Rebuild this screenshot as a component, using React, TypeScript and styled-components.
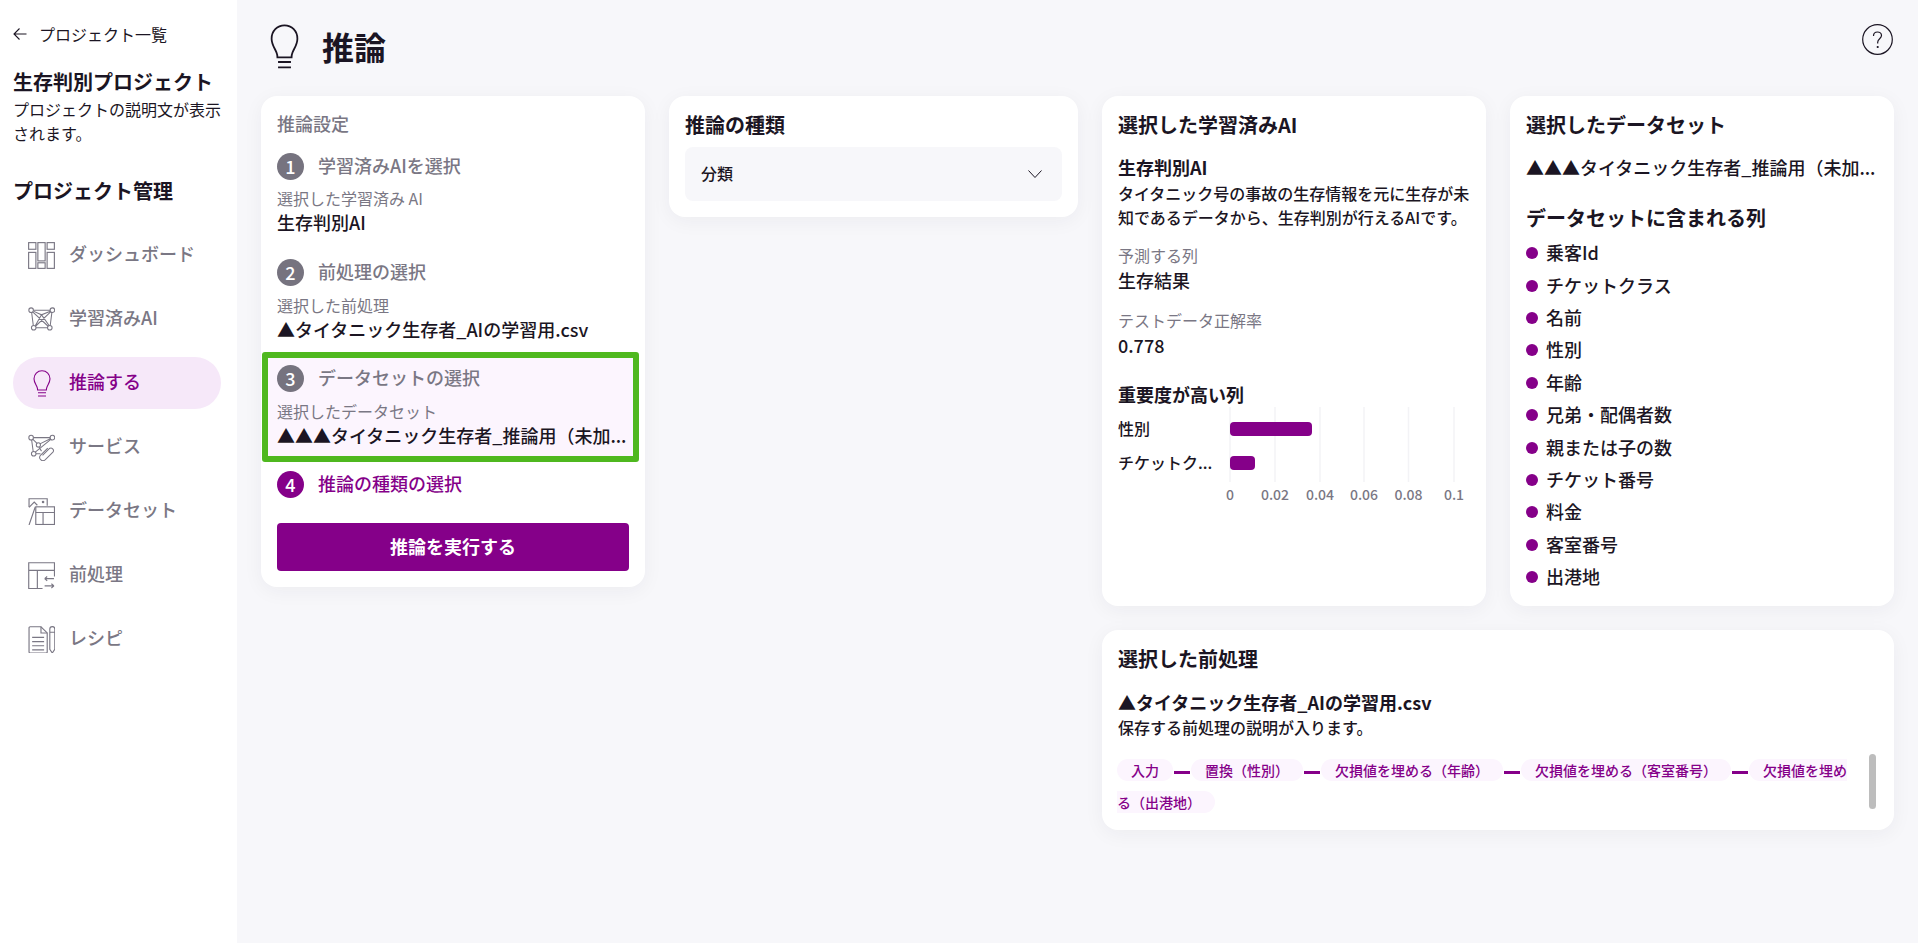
import React from "react";
import styled, { createGlobalStyle, css } from "styled-components";

const PURPLE = "#850089";
const GREY = "#7a7784";
const DARK = "#1b1523";

// the CJK face sits a little low in its line box, so single lines get a shorter box plus padding
const line = (height: number) => css`
  line-height: ${height - 2}px;
  padding-bottom: 2px;
`;

const GlobalStyle = createGlobalStyle`
  html, body {
    margin: 0;
    height: 100%;
    overflow: hidden;
    background: #f7f7fa;
  }
  body {
    font-family: "Noto Sans CJK JP", "Noto Sans", sans-serif;
    color: ${DARK};
  }
  * {
    box-sizing: border-box;
  }
`;

const BulbIcon: React.FC<{ width: number; height: number }> = ({ width, height }) => (
  <svg width={width} height={height} viewBox="0 0 18 27" fill="none" stroke="currentColor" strokeWidth="1.1" preserveAspectRatio="none">
    <path d="M9 .8C4.4.8 1 4.3 1 8.8c0 3.4 1.9 5.6 3 8.2.4.9.6 1.7.6 3h8.8c0-1.3.2-2.1.6-3 1.100-2.600 3-4.800 3-8.200C17 4.300 13.600.8 9 .8z" />
    <path d="M5 22.800h8M5 26h8" />
  </svg>
);

const DashboardIcon = () => (
  <svg width="27" height="27" viewBox="0 0 26 26" fill="none" stroke="currentColor" strokeWidth="1.1">
    <rect x="0.6" y="0.6" width="7" height="6.400" />
    <rect x="0.6" y="10" width="7" height="15.400" />
    <rect x="9.500" y="0.6" width="7" height="17.600" />
    <rect x="9.500" y="20" width="7" height="5.400" />
    <rect x="18.400" y="0.6" width="7" height="6.400" />
    <rect x="18.400" y="10" width="7" height="15.400" />
  </svg>
);

const NetworkIcon = () => (
  <svg width="27" height="27" viewBox="0 0 26 26" fill="none" stroke="currentColor" strokeWidth="1">
    <circle cx="3" cy="4" r="2.200" />
    <circle cx="23.500" cy="4" r="2.200" />
    <circle cx="5.500" cy="21" r="2.200" />
    <circle cx="21" cy="21" r="2.200" />
    <path d="M5.200 4h16.100M7.700 21h11.100M4.500 5.600l14.900 13.900M21.800 5.600 7.200 19.500M3.500 6.200l1.600 12.600M23 6.200l-1.600 12.600M5.700 5.200l7.300 3.300 8.500-3.500M7 19l6-10.500 7.500 10.500" />
  </svg>
);

const ServiceIcon = () => (
  <svg width="27" height="27" viewBox="0 0 26 26" fill="none" stroke="currentColor" strokeWidth="1">
    <circle cx="3" cy="3.500" r="2.200" />
    <circle cx="23.500" cy="3.500" r="2.200" />
    <circle cx="5.500" cy="19" r="2.200" />
    <circle cx="10" cy="10.500" r="2" />
    <path d="M5.200 3.500h16.100M4.500 5l4.200 4M22 5.200 7 17.500M3.500 5.700 5 16.800M10.500 12.500l2.500 4M7.700 19H12M11.500 9.500l10-5" />
    <path d="m14 20.500 6.500-6.500a2.500 2.500 0 0 1 3.500 3.500l-7.500 7.500a3.200 3.200 0 0 1-4.500-4.500l7-7" />
  </svg>
);

const DatasetIcon = () => (
  <svg width="27" height="27" viewBox="0 0 26 26" fill="none" stroke="currentColor" strokeWidth="1.1">
    <path d="M18.500 7.500V.7H1v8M1 26l6-17.500" />
    <path d="M1 9l5-5 3 3" />
    <circle cx="14.500" cy="3.800" r="0.700" />
    <rect x="7.500" y="8.500" width="18" height="17" />
    <path d="M7.500 14h18M14.500 14v11.500" />
  </svg>
);

const PreprocessIcon = () => (
  <svg width="27" height="27" viewBox="0 0 26 26" fill="none" stroke="currentColor" strokeWidth="1.1">
    <path d="M25.500 14V.7H.7v25h13.300M.7 8h24.800M9 8v17.700" />
    <path d="M16 16h9M16 16l2.500-2M16 16l2.500 2M25 23h-9M25 23l-2.500-2M25 23l-2.500 2" />
  </svg>
);

const RecipeIcon = () => (
  <svg width="27" height="27" viewBox="0 0 26 26" fill="none" stroke="currentColor" strokeWidth="1.1">
    <path d="M2 .7h10.500l6 6V25a1 1 0 0 1-1 1H2a1 1 0 0 1-1-1V1.700a1 1 0 0 1 1-1z" />
    <path d="M12.500.7v6h6M4 11h11.500M4 15h11.500M4 19h11.500M4 23h11.500" />
    <path d="M21 3a2.400 2.400 0 0 1 4.800 0v19.500l-2.400 3.500-2.400-3.500zM21 6h4.800" />
  </svg>
);

const navItems = [
  { label: "ダッシュボード", icon: <DashboardIcon /> },
  { label: "学習済みAI", icon: <NetworkIcon /> },
  { label: "推論する", icon: <BulbIcon width={18} height={27} />, active: true },
  { label: "サービス", icon: <ServiceIcon /> },
  { label: "データセット", icon: <DatasetIcon /> },
  { label: "前処理", icon: <PreprocessIcon /> },
  { label: "レシピ", icon: <RecipeIcon /> },
];

const columns = [
  "乗客Id",
  "チケットクラス",
  "名前",
  "性別",
  "年齢",
  "兄弟・配偶者数",
  "親または子の数",
  "チケット番号",
  "料金",
  "客室番号",
  "出港地",
];

const pipeline = ["入力", "置換（性別）", "欠損値を埋める（年齢）", "欠損値を埋める（客室番号）", "欠損値を埋める（出港地）"];

const ImportanceChart = () => {
  const grid = [112, 157, 202, 246, 290.5, 336];
  const ticks = ["0", "0.02", "0.04", "0.06", "0.08", "0.1"];
  return (
    <svg width="352" height="100" viewBox="0 0 352 100" style={{ display: "block" }}>
      {grid.map((x) => (
        <line key={x} x1={x} x2={x} y1="0" y2="75" stroke="#f3f3f6" strokeWidth="1.500" />
      ))}
      <rect x="112" y="15" width="82" height="14" rx="4" fill={PURPLE} />
      <rect x="112" y="49" width="25" height="14" rx="4" fill={PURPLE} />
      <text x="0" y="20.500" dominantBaseline="central" fontSize="16" fontWeight="500" fill={DARK}>性別</text>
      <text x="0" y="54.500" dominantBaseline="central" fontSize="16" fontWeight="500" fill={DARK}>チケットク...</text>
      {ticks.map((t, i) => (
        <text key={t} x={grid[i]} y="87" textAnchor="middle" dominantBaseline="central" fontSize="14" fontWeight="500" fill={GREY}>
          {t}
        </text>
      ))}
    </svg>
  );
};

const App: React.FC = () => {
  return (
    <Page>
      <GlobalStyle />
      <Sidebar>
        <BackLink>
          <svg width="14" height="14" viewBox="0 0 14 14" fill="none" stroke={DARK} strokeWidth="1.100">
            <path d="M13.500 7H1M6.500 1.500 1 7l5.500 5.500" />
          </svg>
          プロジェクト一覧
        </BackLink>
        <ProjectTitle>生存判別プロジェクト</ProjectTitle>
        <ProjectDescription>プロジェクトの説明文が表示されます。</ProjectDescription>
        <SidebarHeading>プロジェクト管理</SidebarHeading>
        <Nav>
          {navItems.map((item) => (
            <NavItem key={item.label} $active={item.active}>
              <NavIcon>{item.icon}</NavIcon>
              {item.label}
            </NavItem>
          ))}
        </Nav>
      </Sidebar>

      <Main>
        <Header>
          <HeaderBulb>
            <BulbIcon width={29} height={45} />
          </HeaderBulb>
          <PageTitle>推論</PageTitle>
          <HelpButton>
            <svg width="31" height="31" viewBox="0 0 31 31" fill="none" stroke={DARK} strokeWidth="1.200">
              <circle cx="15.500" cy="15.500" r="14.800" />
              <path d="M11.500 12c0-2.500 1.800-4 4-4s4 1.600 4 3.600c0 3-3.800 3.400-3.800 6.600v1.300" />
              <circle cx="15.700" cy="23" r="0.500" fill={DARK} />
            </svg>
          </HelpButton>
        </Header>

        <Content>
          <Card>
            <SettingsHeading>推論設定</SettingsHeading>
            <StepRow $top={17}>
              <StepNumber>1</StepNumber>
              <StepLabel>学習済みAIを選択</StepLabel>
            </StepRow>
            <SelectedLabel $top={7}>選択した学習済み AI</SelectedLabel>
            <SelectedValue>生存判別AI</SelectedValue>
            <StepRow $top={24}>
              <StepNumber>2</StepNumber>
              <StepLabel>前処理の選択</StepLabel>
            </StepRow>
            <SelectedLabel>選択した前処理</SelectedLabel>
            <SelectedValue>▲タイタニック生存者_AIの学習用.csv</SelectedValue>
            <HighlightedStep>
              <StepRow>
                <StepNumber>3</StepNumber>
                <StepLabel>データセットの選択</StepLabel>
              </StepRow>
              <SelectedLabel>選択したデータセット</SelectedLabel>
              <SelectedValue>▲▲▲タイタニック生存者_推論用（未加...</SelectedValue>
            </HighlightedStep>
            <StepRow $top={9}>
              <StepNumber $active>4</StepNumber>
              <StepLabel $active>推論の種類の選択</StepLabel>
            </StepRow>
            <RunButton>推論を実行する</RunButton>
          </Card>

          <Card>
            <CardTitle>推論の種類</CardTitle>
            <SelectBox>
              <SelectValue>分類</SelectValue>
              <svg width="14" height="8" viewBox="0 0 14 8" fill="none" stroke={DARK} strokeWidth="1">
                <path d="M.5.5 7 7.500 13.500.5" />
              </svg>
            </SelectBox>
          </Card>

          <RightGrid>
            <InfoCard>
              <CardTitle>選択した学習済みAI</CardTitle>
              <ItemName>生存判別AI</ItemName>
              <ItemDescription>タイタニック号の事故の生存情報を元に生存が未知であるデータから、生存判別が行えるAIです。</ItemDescription>
              <FieldLabel $top={15}>予測する列</FieldLabel>
              <FieldValue>生存結果</FieldValue>
              <FieldLabel $top={16}>テストデータ正解率</FieldLabel>
              <FieldValue>0.778</FieldValue>
              <ChartHeading>重要度が高い列</ChartHeading>
              <ImportanceChart />
            </InfoCard>

            <InfoCard>
              <CardTitle>選択したデータセット</CardTitle>
              <DatasetName>▲▲▲タイタニック生存者_推論用（未加...</DatasetName>
              <SectionTitle>データセットに含まれる列</SectionTitle>
              <ColumnList>
                {columns.map((name) => (
                  <ColumnItem key={name}>{name}</ColumnItem>
                ))}
              </ColumnList>
            </InfoCard>

            <PreprocessCard>
              <CardTitle>選択した前処理</CardTitle>
              <PreprocessName>▲タイタニック生存者_AIの学習用.csv</PreprocessName>
              <PreprocessDescription>保存する前処理の説明が入ります。</PreprocessDescription>
              <Pipeline>
                {pipeline.map((step, i) => (
                  <React.Fragment key={step}>
                    {i > 0 && <PipelineDash />}
                    <PipelineStep>{step}</PipelineStep>
                  </React.Fragment>
                ))}
              </Pipeline>
              <ScrollThumb />
            </PreprocessCard>
          </RightGrid>
        </Content>
      </Main>
    </Page>
  );
};

const Page = styled.div`
  display: flex;
  height: 943px;
`;

const Sidebar = styled.aside`
  width: 237px;
  flex-shrink: 0;
  background: #fff;
  padding: 23px 16px 0 13px;
`;

const BackLink = styled.div`
  display: flex;
  align-items: center;
  gap: 12px;
  font-size: 16px;
  ${line(24)}
`;

const ProjectTitle = styled.div`
  margin-top: 22px;
  font-size: 20px;
  font-weight: 700;
  ${line(28)}
`;

const ProjectDescription = styled.div`
  margin-top: 1px;
  font-size: 16px;
  line-height: 23.500px;
`;

const SidebarHeading = styled.div`
  margin-top: 33px;
  font-size: 20px;
  font-weight: 700;
  ${line(28)}
`;

const Nav = styled.nav`
  display: flex;
  flex-direction: column;
  gap: 12px;
  margin-top: 23px;
`;

const NavItem = styled.div<{ $active?: boolean }>`
  display: flex;
  align-items: center;
  gap: 14px;
  height: 52px;
  padding: 0 0 4px 15px;
  border-radius: 26px;
  font-size: 18px;
  font-weight: 500;
  color: ${(p) => (p.$active ? PURPLE : GREY)};
  background: ${(p) => (p.$active ? "#f6e8f9" : "transparent")};
`;

const NavIcon = styled.span`
  display: flex;
  justify-content: center;
  width: 27px;
  margin-top: 4px;
`;

const Main = styled.main`
  flex: 1;
  min-width: 0;
  padding: 0 24px;
`;

const Header = styled.header`
  display: flex;
  align-items: center;
  height: 96px;
  padding: 0 1px 0 9px;
`;

const HeaderBulb = styled.span`
  display: flex;
  margin-bottom: 3px;
`;

const PageTitle = styled.h1`
  margin: 0 0 0 23px;
  font-size: 32px;
  font-weight: 700;
  ${line(44)}
  margin-bottom: 2px;
`;

const HelpButton = styled.div`
  display: flex;
  align-self: flex-start;
  margin: 24px 0 0 auto;
`;

const Content = styled.div`
  display: grid;
  grid-template-columns: 384px 409px 792px;
  gap: 24px;
  align-items: start;
`;

const Card = styled.section`
  background: #fff;
  border-radius: 16px;
  padding: 16px;
  box-shadow: 0 4px 20px rgba(40, 30, 60, 0.05);
`;

const SettingsHeading = styled.div`
  font-size: 18px;
  font-weight: 500;
  color: ${GREY};
  ${line(24)}
`;

const StepRow = styled.div<{ $top?: number }>`
  display: flex;
  align-items: center;
  gap: 14px;
  height: 27px;
  margin-top: ${(p) => p.$top ?? 0}px;
`;

const StepNumber = styled.span<{ $active?: boolean }>`
  display: flex;
  align-items: center;
  justify-content: center;
  width: 27px;
  height: 27px;
  padding-bottom: 1px;
  border-radius: 50%;
  background: ${(p) => (p.$active ? PURPLE : "#76737f")};
  color: #fff;
  font-size: 18px;
  font-weight: 500;
`;

const StepLabel = styled.span<{ $active?: boolean }>`
  font-size: 18px;
  font-weight: 500;
  color: ${(p) => (p.$active ? PURPLE : GREY)};
  ${line(27)}
`;

const SelectedLabel = styled.div<{ $top?: number }>`
  margin-top: ${(p) => p.$top ?? 8}px;
  font-size: 16px;
  color: ${GREY};
  ${line(24)}
`;

const SelectedValue = styled.div`
  font-size: 18px;
  font-weight: 500;
  white-space: nowrap;
  ${line(24)}
`;

const HighlightedStep = styled.div`
  margin: 10px -10px 0 -15px;
  padding: 7px 4px 8px 9px;
  border: 6px solid #4fb81f;
  border-radius: 3px;
  background: #fcf5fe;
`;

const RunButton = styled.button`
  display: block;
  width: 100%;
  height: 48px;
  margin-top: 25px;
  padding: 0 0 2px;
  border: none;
  border-radius: 4px;
  background: ${PURPLE};
  color: #fff;
  font-family: inherit;
  font-size: 18px;
  font-weight: 700;
`;

const CardTitle = styled.h2`
  margin: 0;
  font-size: 20px;
  font-weight: 700;
  ${line(28)}
`;

const SelectBox = styled.div`
  display: flex;
  align-items: center;
  justify-content: space-between;
  height: 54px;
  margin-top: 7px;
  padding: 0 20px 0 16px;
  border-radius: 8px;
  background: #f7f7fa;
`;

const SelectValue = styled.span`
  font-size: 16px;
  font-weight: 500;
  ${line(24)}
`;

const RightGrid = styled.div`
  display: grid;
  grid-template-columns: 384px 384px;
  gap: 24px;
`;

const InfoCard = styled(Card)`
  height: 510px;
`;

const ItemName = styled.div`
  margin-top: 16px;
  font-size: 18px;
  font-weight: 700;
  ${line(24)}
`;

const DatasetName = styled(ItemName)`
  font-weight: 500;
  white-space: nowrap;
`;

const ItemDescription = styled.div`
  margin-top: 2px;
  font-size: 16px;
  line-height: 23.500px;
  font-weight: 500;
`;

const FieldLabel = styled.div<{ $top: number }>`
  margin-top: ${(p) => p.$top}px;
  font-size: 16px;
  color: ${GREY};
  ${line(24)}
`;

const FieldValue = styled.div`
  margin-top: 1px;
  font-size: 18px;
  font-weight: 500;
  ${line(24)}
`;

const ChartHeading = styled.div`
  margin-top: 25px;
  font-size: 18px;
  font-weight: 700;
  ${line(24)}
`;

const SectionTitle = styled.div`
  margin-top: 25px;
  font-size: 20px;
  font-weight: 700;
  ${line(28)}
`;

const ColumnList = styled.ul`
  margin: 4px 0 0;
  padding: 0;
  list-style: none;
`;

const ColumnItem = styled.li`
  display: flex;
  align-items: center;
  gap: 8px;
  height: 32.400px;
  padding-bottom: 2px;
  font-size: 18px;
  font-weight: 500;

  &::before {
    content: "";
    flex-shrink: 0;
    width: 12px;
    height: 12px;
    margin-top: 2px;
    border-radius: 50%;
    background: ${PURPLE};
  }
`;

const PreprocessCard = styled(Card)`
  position: relative;
  grid-column: 1 / span 2;
  height: 200px;
`;

const PreprocessName = styled.div`
  margin-top: 17px;
  font-size: 18px;
  font-weight: 700;
  ${line(24)}
`;

const PreprocessDescription = styled.div`
  margin-top: 1px;
  font-size: 16px;
  font-weight: 500;
  ${line(24)}
`;

const Pipeline = styled.div`
  margin: 14px 0 0 -1px;
  padding-right: 30px;
  font-size: 14px;
  line-height: 32px;
  font-weight: 500;
  color: ${PURPLE};
`;

const PipelineStep = styled.span`
  padding: 1px 14px;
  border-radius: 12px;
  background: #fcf5fe;
`;

const PipelineDash = styled.span`
  display: inline-block;
  width: 16px;
  height: 3px;
  margin: 0 1px;
  vertical-align: middle;
  background: ${PURPLE};
`;

const ScrollThumb = styled.div`
  position: absolute;
  top: 124px;
  right: 18px;
  width: 7px;
  height: 55px;
  border-radius: 4px;
  background: #bdbdbd;
`;

export default App;
